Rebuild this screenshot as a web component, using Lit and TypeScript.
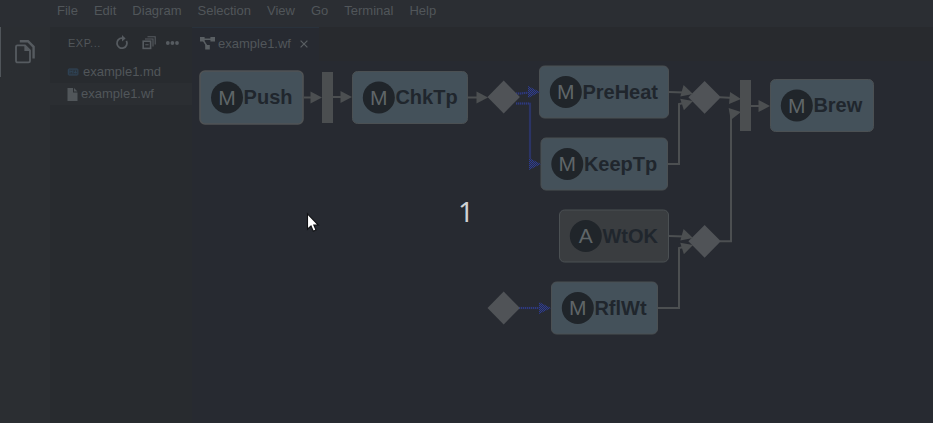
import { LitElement, html, svg, css } from "lit";
import { customElement } from "lit/decorators.js";

interface TaskNode {
  x: number;
  y: number;
  w: number;
  h: number;
  kind: "M" | "A";
  label: string;
  selected?: boolean;
}

const MENUS = ["File", "Edit", "Diagram", "Selection", "View", "Go", "Terminal", "Help"];

const TASKS: TaskNode[] = [
  { x: 200, y: 71, w: 103, h: 53, kind: "M", label: "Push", selected: true },
  { x: 352.5, y: 71.5, w: 115, h: 52, kind: "M", label: "ChkTp" },
  { x: 539.5, y: 66, w: 129, h: 52, kind: "M", label: "PreHeat" },
  { x: 541, y: 138, w: 126.5, h: 52, kind: "M", label: "KeepTp" },
  { x: 559.5, y: 210, w: 109, h: 52, kind: "A", label: "WtOK" },
  { x: 551.5, y: 282, w: 106, h: 52, kind: "M", label: "RflWt" },
  { x: 770.5, y: 79.5, w: 103, h: 52, kind: "M", label: "Brew" },
];

const DIAMONDS = [
  [503.7, 97],
  [704.6, 97.3],
  [704.6, 241.3],
  [503.7, 308],
];

const BARS = [
  [322, 72],
  [740, 80],
];

const EDGES = [
  "M304 97.5H316",
  "M333 97H346",
  "M468 97.5H482",
  "M669 92L684 92.4",
  "M668 164H679V104L684 103",
  "M720 97.2L734 98",
  "M669 236L684 236.4",
  "M658 308H679V248L684 247",
  "M720 241.3H731V116L734 114",
  "M751 106H764",
];

const HEADS = [
  [322, 97.5, 0],
  [352, 97, 0],
  [488, 97.5, 0],
  [693, 94, 16],
  [693, 101, -18],
  [741, 99, 5],
  [693, 238, 16],
  [693, 245, -18],
  [741, 112, -10],
  [770, 106, 0],
];

const FLOWS = ["M516 93.5H520L530 92.5", "M516 103.5H530V159", "M519 308H540"];
const FLOW_HEADS = [
  [540, 92],
  [541, 164],
  [551, 308],
];

@customElement("workflow-diagram")
export class WorkflowDiagram extends LitElement {
  static styles = css`
    :host { display: block; overflow: hidden; }
    svg { display: block; }
    .task { fill: #44515a; stroke: #4b5053; stroke-width: 1; }
    .auto { fill: #3a3d40; }
    .selected { stroke-width: 1.6; stroke: #505355; }
    .disc { fill: #20252a; }
    .kind { fill: #5f6568; font: 21px "Liberation Sans", Arial, sans-serif; text-anchor: middle; }
    .label { fill: #20262d; font: bold 20px "Liberation Sans", Arial, sans-serif; }
    .gate { fill: #505357; }
    .bar { fill: #4b4e50; }
    .edge { fill: none; stroke: #4c4f51; stroke-width: 2; }
    .head { fill: #4c4f51; }
    .flow { fill: none; stroke: #292e4a; stroke-width: 2.4; }
    .dots { fill: none; stroke: #2e3a80; stroke-width: 2; stroke-dasharray: 1 1; }
    .flow-head { fill: url(#weave); }
  `;

  render() {
    return html`<svg width="741" height="362" viewBox="192 61 741 362">
      <defs>
        <pattern id="weave" width="2" height="2" patternUnits="userSpaceOnUse">
          <rect width="2" height="2" fill="#2a2e40"></rect>
          <rect width="1" height="1" fill="#2c3b94"></rect>
          <rect x="1" y="1" width="1" height="1" fill="#2c3b94"></rect>
        </pattern>
      </defs>
      ${EDGES.map((d) => svg`<path class="edge" d=${d}></path>`)}
      ${FLOWS.map((d) => svg`<path class="flow" d=${d}></path><path class="dots" d=${d}></path>`)}
      ${BARS.map(([x, y]) => svg`<rect class="bar" x=${x} y=${y} width="11" height="51"></rect>`)}
      ${DIAMONDS.map(([x, y]) => svg`<path class="gate" d="M${x - 16.2} ${y}L${x} ${y - 16.4}L${x + 16.2} ${y}L${x} ${y + 16.4}Z"></path>`)}
      ${TASKS.map((t) => {
        const cy = t.y + t.h / 2;
        const cx = t.x + (t.selected ? 27 : 26.3);
        return svg`
          <rect class="task ${t.kind === "A" ? "auto" : ""} ${t.selected ? "selected" : ""}" x=${t.x} y=${t.y} width=${t.w} height=${t.h} rx="5"></rect>
          <circle class="disc" cx=${cx} cy=${cy} r="16"></circle>
          <text class="kind" x=${cx} y=${cy + 7}>${t.kind}</text>
          <text class="label" x=${cx + 16.6} y=${cy + 6.5}>${t.label}</text>`;
      })}
      ${HEADS.map(([x, y, a]) => svg`<path class="head" transform="translate(${x} ${y}) rotate(${a})" d="M0 0L-11.5 -6V6Z"></path>`)}
      ${FLOW_HEADS.map(([x, y]) => svg`<path class="flow-head" d="M${x} ${y}l-12 -6v12Z"></path>`)}
    </svg>`;
  }
}

@customElement("app-root")
export class AppRoot extends LitElement {
  static styles = css`
    :host {
      display: flex; flex-direction: column; position: relative; overflow: hidden;
      width: 933px; height: 423px; background: #272a31; color: #51565a;
      font: 13px/16px "Liberation Sans", Arial, sans-serif;
    }
    svg { display: block; flex: none; }
    .menu { display: flex; height: 27px; flex: none; padding-left: 49px; background: #2b2e33; }
    .menu span { padding: 2.5px 8px 0; }
    .body { display: flex; flex: 1; min-height: 0; }
    .activity { width: 50px; flex: none; box-sizing: border-box; background: #2b2e32; }
    .view { height: 50px; display: flex; align-items: center; padding-left: 13px; border-left: 1px solid #50555a; }
    .side { width: 142px; flex: none; background: #282b2f; }
    .head { height: 34px; display: flex; align-items: center; padding: 0 0 2px 18px; box-sizing: border-box; }
    .title { font-size: 11px; letter-spacing: .5px; width: 47px; }
    .refresh { margin-right: 13px; }
    .collapse { margin-right: 9px; }
    .file { height: 22px; display: flex; align-items: center; padding-left: 17px; box-sizing: border-box; }
    .file svg { margin-right: 4px; }
    .file.plain svg { margin-right: 3px; }
    .current { background: #2b2e32; }
    .editor { flex: 1; min-width: 0; }
    .tabs { height: 34px; display: flex; background: #282a2e; }
    .tab { width: 127px; box-sizing: border-box; display: flex; align-items: center; padding: 0 0 2px 8px; background: #272a31; border-top: 1px solid #29323c; }
    .tab .name { margin-left: 3px; width: 82px; }
    .count { position: absolute; left: 458px; top: 196px; font: 28px/30px "Noto Sans", sans-serif; color: #cfd1d3; }
    .pointer { position: absolute; left: 306px; top: 212px; }
  `;

  render() {
    return html`
      <div class="menu">${MENUS.map((m) => html`<span>${m}</span>`)}</div>
      <div class="body">
        <div class="activity">
          <div class="view">
            <svg width="23" height="26" viewBox="0 0 23 26" fill="none" stroke="#565b60">
              <path stroke-width="1.8" d="M3.4 6.4H11L16 11.4V21.8Q16 23.4 14.4 23.4H3.6Q2 23.4 2 21.8V7.8Q2 6.4 3.4 6.4Z"></path>
              <path fill="#565b60" stroke="none" d="M10.4 6L16.4 12H10.4Z"></path>
              <path stroke-width="2.4" d="M5.8 2.2H14L19.6 7.8V19.4"></path>
            </svg>
          </div>
        </div>
        <div class="side">
          <div class="head">
            <span class="title">EXP...</span>
            <svg class="refresh" width="14" height="16" viewBox="0 0 14 16">
              <path d="M8.5 3.2H7A5 5 0 1 0 11.4 5.9" fill="none" stroke="#565b60" stroke-width="1.8"></path>
              <path d="M7 0L10.6 3.4L7 6.6Z" fill="#565b60"></path>
            </svg>
            <svg class="collapse" width="14" height="14" viewBox="0 0 14 14" fill="none" stroke="#565b60">
              <rect x="1.2" y="5.2" width="7.4" height="7.2" stroke-width="1.6"></rect>
              <path d="M3.3 8.8H6.6M3 3H11V10.5M5.5 .7H13.2V8.5" stroke-width="1.1"></path>
            </svg>
            <svg width="15" height="6" viewBox="0 0 15 6" fill="#565b60">
              <circle cx="2.8" cy="3" r="1.9"></circle><circle cx="7.4" cy="3" r="1.9"></circle><circle cx="12" cy="3" r="1.9"></circle>
            </svg>
          </div>
          <div class="file">
            <svg width="12" height="8" viewBox="0 0 12 8">
              <rect x="1.3" y="1" width="9.6" height="6" rx=".6" fill="#2a333c" stroke="#30465a"></rect>
              <path d="M3 5.5V2.6L4.4 4L5.8 2.6V5.5M8.4 2.4V5M7.2 4L8.4 5.3L9.6 4" fill="none" stroke="#30465a" stroke-width=".9"></path>
            </svg>
            <span>example1.md</span>
          </div>
          <div class="file plain current">
            <svg width="11" height="13" viewBox="0 0 11 13" fill="#51565a">
              <path d="M.5 0H6V4.5H10.5V13H.5ZM7 0L10.5 3.5H7Z"></path>
            </svg>
            <span>example1.wf</span>
          </div>
        </div>
        <div class="editor">
          <div class="tabs">
            <div class="tab">
              <svg width="15" height="13" viewBox="0 0 15 13">
                <path d="M2 2.2H12M3 3L7.2 9.5" stroke="#5a5f63" stroke-width="1.4"></path>
                <path d="M0 0H4.6V4.6H0ZM10.4 0H15V4.6H10.4ZM5.2 8H9.8V12.6H5.2Z" fill="#5a5f63"></path>
              </svg>
              <span class="name">example1.wf</span>
              <svg width="8" height="8" viewBox="0 0 8 8"><path d="M.6 .6L7.4 7.4M7.4 .6L.6 7.4" stroke="#5a5f63" stroke-width="1.2"></path></svg>
            </div>
          </div>
          <workflow-diagram></workflow-diagram>
        </div>
      </div>
      <span class="count">1</span>
      <svg class="pointer" width="14" height="21" viewBox="0 0 14 21">
        <path d="M1.5 1.8V17.2L5 14L7.3 19.3L10 18L7.8 13H12.3Z" fill="#fff" stroke="#101114" stroke-width="1.1"></path>
      </svg>`;
  }
}
